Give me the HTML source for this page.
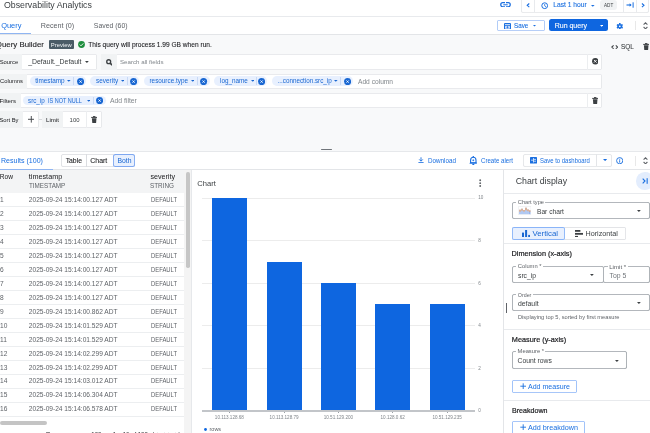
<!DOCTYPE html><html><head><meta charset="utf-8"><style>
html,body{margin:0;padding:0;width:650px;height:433px;overflow:hidden;background:#fff}
body{position:relative;font-family:"Liberation Sans",sans-serif;filter:blur(0.45px)}
.r{position:absolute;display:block}
.t{position:absolute;white-space:pre;line-height:1}
</style></head><body>
<div class="r" style="left:0px;top:0px;width:650px;height:433px;background:#ffffff;"></div>
<div class="r" style="left:0px;top:34px;width:650px;height:118px;background:#f8f9fa;"></div>
<div class="r" style="left:0px;top:16px;width:650px;height:1px;background:#e8eaed;"></div>
<div class="r" style="left:0px;top:33.5px;width:650px;height:1px;background:#e3e5e8;"></div>
<div class="r" style="left:0px;top:151px;width:650px;height:0.8px;background:#e6e8eb;"></div>
<div class="r" style="left:0px;top:169px;width:650px;height:1px;background:#e3e5e8;"></div>
<svg class="r" style="left:499.5px;top:1.8px" width="11" height="5.6" viewBox="0 0 11 5.6"><path d="M5 0.75 H2.8 A2.05 2.05 0 0 0 2.8 4.85 H5 M6 0.75 H8.2 A2.05 2.05 0 0 1 8.2 4.85 H6" fill="none" stroke="#1a6fe0" stroke-width="1.25"/><rect x="3.3" y="2.3" width="4.4" height="1" fill="#1a6fe0"/></svg>
<div class="r" style="left:520.8px;top:-4px;width:128px;height:16.9px;background:#fff;box-shadow:inset 0 0 0 0.8px #e3e5e8;border-radius:2.5px;"></div>
<div class="r" style="left:534.2px;top:0px;width:0.8px;height:12px;background:#e8eaed;"></div>
<div class="r" style="left:623.2px;top:0px;width:0.8px;height:12px;background:#e8eaed;"></div>
<div class="r" style="left:636px;top:0px;width:0.8px;height:12px;background:#e8eaed;"></div>
<svg class="r" style="left:525.6px;top:3.2px" width="4.2" height="4.6" viewBox="0 0 4.2 4.6"><path d="M3.3 0.5 L1.2 2.3 L3.3 4.1" fill="none" stroke="#1a6fe0" stroke-width="1.1"/></svg>
<svg class="r" style="left:540.8px;top:2.4px" width="7.4" height="7.4" viewBox="0 0 7.4 7.4"><circle cx="3.7" cy="3.7" r="2.9" fill="none" stroke="#1a6fe0" stroke-width="1"/><path d="M3.7 2 V3.9 L5 4.8" fill="none" stroke="#1a6fe0" stroke-width="0.8"/></svg>
<svg class="r" style="left:590.8px;top:5px" width="4" height="2" viewBox="0 0 4 2"><path d="M0 0 H3.6 L1.8 1.8Z" fill="#1a6fe0"/></svg>
<div class="r" style="left:599.6px;top:0px;width:17px;height:10px;background:#f1f3f4;border-radius:3px;"></div>
<svg class="r" style="left:626px;top:2px" width="8.5" height="6" viewBox="0 0 8.5 6"><path d="M0.5 3 H5" stroke="#1a6fe0" stroke-width="1.1"/><path d="M3.6 1.3 L5.6 3 L3.6 4.7Z" fill="#1a6fe0"/><rect x="6.6" y="0.3" width="1" height="5.4" fill="#1a6fe0"/></svg>
<svg class="r" style="left:640.6px;top:3.2px" width="4.2" height="4.6" viewBox="0 0 4.2 4.6"><path d="M0.9 0.5 L3.0 2.3 L0.9 4.1" fill="none" stroke="#1a6fe0" stroke-width="1.1"/></svg>
<div class="r" style="left:0px;top:32.6px;width:31px;height:1.2px;background:#8fb5f2;"></div>
<div class="r" style="left:497.3px;top:20.2px;width:47.6px;height:10.6px;background:#fff;box-shadow:inset 0 0 0 0.8px #9ebff5;border-radius:2px;"></div>
<svg class="r" style="left:503.8px;top:22.6px" width="7" height="6.6" viewBox="0 0 7 6.6"><rect x="0" y="0" width="7" height="6.6" rx="1" fill="#1a6fe0"/><rect x="1" y="1.3" width="5" height="0.7" fill="#fff"/><rect x="1" y="2.8" width="5" height="2.9" rx="0.4" fill="#cfe0fb"/><path d="M3.5 3.1 V5.4 M2.4 4.25 H4.6" stroke="#1a6fe0" stroke-width="0.7"/></svg>
<svg class="r" style="left:533.2px;top:25.2px" width="3.2" height="1.8" viewBox="0 0 3.2 1.8"><path d="M0 0 H3 L1.5 1.6Z" fill="#1a6fe0"/></svg>
<div class="r" style="left:549px;top:19.4px;width:58.7px;height:11.5px;background:#0e66e0;border-radius:2.5px;"></div>
<svg class="r" style="left:599.8px;top:24.6px" width="3.4" height="2" viewBox="0 0 3.4 2"><path d="M0 0 H3.2 L1.6 1.7Z" fill="#fff"/></svg>
<svg class="r" style="left:615.5px;top:22.7px" width="7.6" height="6.6" viewBox="0 0 7.6 6.6"><g transform="translate(3.8 3.3)"><circle r="2.4" fill="#1a6fe0"/><rect x="-0.8" y="-3.3" width="1.6" height="1.6" fill="#1a6fe0" transform="rotate(0)"/><rect x="-0.8" y="-3.3" width="1.6" height="1.6" fill="#1a6fe0" transform="rotate(60)"/><rect x="-0.8" y="-3.3" width="1.6" height="1.6" fill="#1a6fe0" transform="rotate(120)"/><rect x="-0.8" y="-3.3" width="1.6" height="1.6" fill="#1a6fe0" transform="rotate(180)"/><rect x="-0.8" y="-3.3" width="1.6" height="1.6" fill="#1a6fe0" transform="rotate(240)"/><rect x="-0.8" y="-3.3" width="1.6" height="1.6" fill="#1a6fe0" transform="rotate(300)"/><circle r="0.9" fill="#fff"/></g></svg>
<div class="r" style="left:635.0px;top:21px;width:0.7px;height:9px;background:#e8e8e8;"></div>
<svg class="r" style="left:642.9px;top:21.8px" width="5" height="7.6" viewBox="0 0 5 7.6"><path d="M0.6 2.6 L2.5 0.8 L4.4 2.6 M0.6 5 L2.5 6.8 L4.4 5" fill="none" stroke="#5f6368" stroke-width="1.1"/></svg>
<div class="r" style="left:48.7px;top:40px;width:25.1px;height:8.9px;background:#4a5b66;border-radius:1px;"></div>
<svg class="r" style="left:78.2px;top:41.4px" width="7" height="7" viewBox="0 0 7 7"><circle cx="3.5" cy="3.5" r="3.4" fill="#1e8e3e"/><path d="M1.8 3.6 L3 4.8 L5.3 2.4" fill="none" stroke="#fff" stroke-width="0.9"/></svg>
<svg class="r" style="left:611px;top:45px" width="7.4" height="4.2" viewBox="0 0 7.4 4.2"><path d="M2.6 0.4 L0.8 2.1 L2.6 3.8 M4.8 0.4 L6.6 2.1 L4.8 3.8" fill="none" stroke="#3c4043" stroke-width="1.05"/></svg>
<svg class="r" style="left:642.6px;top:43.2px" width="6.4" height="7.2" viewBox="0 0 6.4 7.2"><rect x="0.2" y="0.9" width="6" height="1" fill="#3c4043"/><rect x="2" y="0.1" width="2.4" height="1" fill="#3c4043"/><path d="M0.9 2.2 H5.5 L5.1 7 H1.3Z" fill="#3c4043"/></svg>
<div class="r" style="left:0px;top:54.2px;width:97px;height:15.6px;background:#fff;box-shadow:inset 0 0 0 0.8px #e2e4e7;border-radius:2px;"></div>
<div class="r" style="left:0px;top:54.2px;width:21.8px;height:15.6px;background:#f1f3f4;"></div>
<svg class="r" style="left:85.2px;top:61.2px" width="4" height="2.2" viewBox="0 0 4 2.2"><path d="M0 0 H3.8 L1.9 1.9Z" fill="#3c4043"/></svg>
<div class="r" style="left:100.5px;top:54.2px;width:501.5px;height:15.6px;background:#fff;box-shadow:inset 0 0 0 0.8px #e2e4e7;border-radius:2px;"></div>
<div class="r" style="left:100.5px;top:54.2px;width:16.8px;height:15.6px;background:#f1f3f4;"></div>
<svg class="r" style="left:105.6px;top:58.8px" width="6.8" height="6.8" viewBox="0 0 6.8 6.8"><circle cx="2.7" cy="2.7" r="1.95" fill="none" stroke="#3c4043" stroke-width="1.35"/><path d="M4.1 4.1 L6.3 6.3" stroke="#3c4043" stroke-width="1.6"/></svg>
<div class="r" style="left:587.3px;top:54.2px;width:0.7px;height:15.6px;background:#eceef0;"></div>
<svg class="r" style="left:591.6px;top:58.3px" width="6.6" height="6.6" viewBox="0 0 6.6 6.6"><circle cx="3.3" cy="3.3" r="3.2" fill="#3c4043"/><path d="M2 2 L4.6 4.6 M4.6 2 L2 4.6" stroke="#fff" stroke-width="0.9"/></svg>
<div class="r" style="left:0px;top:73.6px;width:602px;height:15.2px;background:#fff;box-shadow:inset 0 0 0 0.8px #e2e4e7;border-radius:2px;"></div>
<div class="r" style="left:0px;top:73.6px;width:27px;height:15.2px;background:#f1f3f4;"></div>
<div class="r" style="left:29.7px;top:76.2px;width:56.3px;height:9.799999999999997px;background:#e8f0fe;border-radius:4.899999999999999px;"></div>
<svg class="r" style="left:67.4px;top:80.3px" width="3.6" height="2" viewBox="0 0 3.6 2"><path d="M0 0 H3.6 L1.8 1.8Z" fill="#1967d2"/></svg>
<div class="r" style="left:73.3px;top:77.2px;width:0.7px;height:7.799999999999997px;background:#c9d9f5;"></div>
<svg class="r" style="left:76.7px;top:77.5px" width="7.2" height="7.2" viewBox="0 0 7.2 7.2"><circle cx="3.6" cy="3.6" r="3.55" fill="#1967d2"/><path d="M2.5 2.5 L4.7 4.7 M4.7 2.5 L2.5 4.7" stroke="#fff" stroke-width="0.9"/></svg>
<div class="r" style="left:90.2px;top:76.2px;width:49.3px;height:9.799999999999997px;background:#e8f0fe;border-radius:4.899999999999999px;"></div>
<svg class="r" style="left:120.9px;top:80.3px" width="3.6" height="2" viewBox="0 0 3.6 2"><path d="M0 0 H3.6 L1.8 1.8Z" fill="#1967d2"/></svg>
<div class="r" style="left:126.8px;top:77.2px;width:0.7px;height:7.799999999999997px;background:#c9d9f5;"></div>
<svg class="r" style="left:130.20000000000002px;top:77.5px" width="7.2" height="7.2" viewBox="0 0 7.2 7.2"><circle cx="3.6" cy="3.6" r="3.55" fill="#1967d2"/><path d="M2.5 2.5 L4.7 4.7 M4.7 2.5 L2.5 4.7" stroke="#fff" stroke-width="0.9"/></svg>
<div class="r" style="left:143.9px;top:76.2px;width:65.79999999999998px;height:9.799999999999997px;background:#e8f0fe;border-radius:4.899999999999999px;"></div>
<svg class="r" style="left:190.7px;top:80.3px" width="3.6" height="2" viewBox="0 0 3.6 2"><path d="M0 0 H3.6 L1.8 1.8Z" fill="#1967d2"/></svg>
<div class="r" style="left:196.6px;top:77.2px;width:0.7px;height:7.799999999999997px;background:#c9d9f5;"></div>
<svg class="r" style="left:200.4px;top:77.5px" width="7.2" height="7.2" viewBox="0 0 7.2 7.2"><circle cx="3.6" cy="3.6" r="3.55" fill="#1967d2"/><path d="M2.5 2.5 L4.7 4.7 M4.7 2.5 L2.5 4.7" stroke="#fff" stroke-width="0.9"/></svg>
<div class="r" style="left:214.2px;top:76.2px;width:53.30000000000001px;height:9.799999999999997px;background:#e8f0fe;border-radius:4.899999999999999px;"></div>
<svg class="r" style="left:250.5px;top:80.3px" width="3.6" height="2" viewBox="0 0 3.6 2"><path d="M0 0 H3.6 L1.8 1.8Z" fill="#1967d2"/></svg>
<div class="r" style="left:256.40000000000003px;top:77.2px;width:0.7px;height:7.799999999999997px;background:#c9d9f5;"></div>
<svg class="r" style="left:258.2px;top:77.5px" width="7.2" height="7.2" viewBox="0 0 7.2 7.2"><circle cx="3.6" cy="3.6" r="3.55" fill="#1967d2"/><path d="M2.5 2.5 L4.7 4.7 M4.7 2.5 L2.5 4.7" stroke="#fff" stroke-width="0.9"/></svg>
<div class="r" style="left:272.2px;top:76.2px;width:81.19999999999999px;height:9.799999999999997px;background:#e8f0fe;border-radius:4.899999999999999px;"></div>
<svg class="r" style="left:334.4px;top:80.3px" width="3.6" height="2" viewBox="0 0 3.6 2"><path d="M0 0 H3.6 L1.8 1.8Z" fill="#1967d2"/></svg>
<div class="r" style="left:340.3px;top:77.2px;width:0.7px;height:7.799999999999997px;background:#c9d9f5;"></div>
<svg class="r" style="left:344.09999999999997px;top:77.5px" width="7.2" height="7.2" viewBox="0 0 7.2 7.2"><circle cx="3.6" cy="3.6" r="3.55" fill="#1967d2"/><path d="M2.5 2.5 L4.7 4.7 M4.7 2.5 L2.5 4.7" stroke="#fff" stroke-width="0.9"/></svg>
<div class="r" style="left:0px;top:93.2px;width:602px;height:15.1px;background:#fff;box-shadow:inset 0 0 0 0.8px #e2e4e7;border-radius:2px;"></div>
<div class="r" style="left:0px;top:93.2px;width:20.5px;height:15.1px;background:#f1f3f4;"></div>
<div class="r" style="left:22.6px;top:95.8px;width:83.0px;height:9.299999999999997px;background:#e8f0fe;border-radius:4.649999999999999px;"></div>
<svg class="r" style="left:86.8px;top:99.64999999999999px" width="3.6" height="2" viewBox="0 0 3.6 2"><path d="M0 0 H3.6 L1.8 1.8Z" fill="#1967d2"/></svg>
<div class="r" style="left:92.69999999999999px;top:96.8px;width:0.7px;height:7.299999999999997px;background:#c9d9f5;"></div>
<svg class="r" style="left:96.3px;top:96.85px" width="7.2" height="7.2" viewBox="0 0 7.2 7.2"><circle cx="3.6" cy="3.6" r="3.55" fill="#1967d2"/><path d="M2.5 2.5 L4.7 4.7 M4.7 2.5 L2.5 4.7" stroke="#fff" stroke-width="0.9"/></svg>
<div class="r" style="left:587.3px;top:93.2px;width:0.7px;height:15.1px;background:#eceef0;"></div>
<svg class="r" style="left:592px;top:97.3px" width="6.4" height="7.2" viewBox="0 0 6.4 7.2"><rect x="0.2" y="0.9" width="6" height="1" fill="#3c4043"/><rect x="2" y="0.1" width="2.4" height="1" fill="#3c4043"/><path d="M0.9 2.2 H5.5 L5.1 7 H1.3Z" fill="#3c4043"/></svg>
<div class="r" style="left:0px;top:111.4px;width:38.5px;height:16.2px;background:#fff;box-shadow:inset 0 0 0 0.8px #e2e4e7;border-radius:2px;"></div>
<div class="r" style="left:0px;top:111.4px;width:22.5px;height:16.2px;background:#f1f3f4;"></div>
<svg class="r" style="left:27.5px;top:116.3px" width="6.6" height="6.6" viewBox="0 0 6.6 6.6"><path d="M3.3 0 V6.6 M0 3.3 H6.6" stroke="#3c4043" stroke-width="0.9"/></svg>
<div class="r" style="left:38.8px;top:119.3px;width:3.2px;height:0.7px;background:#d5d7da;"></div>
<div class="r" style="left:41.5px;top:111.4px;width:60.2px;height:16.2px;background:#fff;box-shadow:inset 0 0 0 0.8px #e2e4e7;border-radius:2px;"></div>
<div class="r" style="left:41.5px;top:111.4px;width:21.2px;height:16.2px;background:#f1f3f4;"></div>
<div class="r" style="left:86.2px;top:111.4px;width:0.7px;height:16.2px;background:#eceef0;"></div>
<svg class="r" style="left:90.8px;top:115.8px" width="6.4" height="7.2" viewBox="0 0 6.4 7.2"><rect x="0.2" y="0.9" width="6" height="1" fill="#3c4043"/><rect x="2" y="0.1" width="2.4" height="1" fill="#3c4043"/><path d="M0.9 2.2 H5.5 L5.1 7 H1.3Z" fill="#3c4043"/></svg>
<div class="r" style="left:321.4px;top:148.9px;width:10.5px;height:1.6px;background:#70757a;border-radius:0.8px;"></div>
<div class="r" style="left:0px;top:168.6px;width:52.7px;height:1.2px;background:#8fb5f2;"></div>
<div class="r" style="left:61.2px;top:154.3px;width:74.1px;height:12.9px;background:#fff;box-shadow:inset 0 0 0 0.8px #dadce0;border-radius:2.5px;"></div>
<div class="r" style="left:86.3px;top:154.3px;width:0.7px;height:12.9px;background:#dadce0;"></div>
<div class="r" style="left:112.6px;top:154.3px;width:22.7px;height:12.9px;background:#e8f0fe;box-shadow:inset 0 0 0 0.9px #7fa8f0;border-radius:2.5px;"></div>
<svg class="r" style="left:418.3px;top:157.3px" width="6" height="6.2" viewBox="0 0 6 6.2"><path d="M3 0.3 V4 M1.2 2.4 L3 4.2 L4.8 2.4" fill="none" stroke="#1a6fe0" stroke-width="0.9"/><rect x="0.4" y="5.2" width="5.2" height="0.9" fill="#1a6fe0"/></svg>
<svg class="r" style="left:468.9px;top:156.0px" width="8.6" height="9" viewBox="0 0 8.6 9"><rect x="3.6" y="0" width="1.4" height="1.6" rx="0.5" fill="#1a6fe0"/><path d="M1.6 7 V4.3 Q1.6 1.3 4.3 1.3 Q7 1.3 7 4.3 V7 Z" fill="none" stroke="#1a6fe0" stroke-width="1.1"/><path d="M0.2 7.4 L1.4 6.3 H7.2 L8.4 7.4 Z" fill="#1a6fe0"/><path d="M3.4 4.3 H5.2 M4.3 3.4 V5.2" stroke="#1a6fe0" stroke-width="0.8"/><rect x="3.3" y="7.8" width="2" height="1.1" rx="0.5" fill="#1a6fe0"/></svg>
<div class="r" style="left:523px;top:154.3px;width:88.7px;height:12.3px;background:#fff;box-shadow:inset 0 0 0 0.8px #e0e2e5;border-radius:2.5px;"></div>
<div class="r" style="left:596.2px;top:154.4px;width:0.7px;height:12px;background:#e3e5e8;"></div>
<svg class="r" style="left:530px;top:157.3px" width="7" height="6.5" viewBox="0 0 7 6.5"><rect x="0" y="0" width="7" height="6.5" rx="0.6" fill="#1a6fe0"/><path d="M3.5 1 V5.5 M1 3.2 H3.5 M3.5 2.4 H6 M3.5 4.2 H6" stroke="#fff" stroke-width="0.7"/></svg>
<svg class="r" style="left:603.0px;top:159.2px" width="4.2" height="2.2" viewBox="0 0 4.2 2.2"><path d="M0 0 H4.2 L2.1 2.1Z" fill="#1a6fe0"/></svg>
<svg class="r" style="left:615.8px;top:156.8px" width="7.4" height="7.4" viewBox="0 0 7.4 7.4"><circle cx="3.7" cy="3.7" r="3.1" fill="none" stroke="#1a6fe0" stroke-width="0.9"/><rect x="3.25" y="3.2" width="0.9" height="2.4" fill="#1a6fe0"/><rect x="3.25" y="1.8" width="0.9" height="0.9" fill="#1a6fe0"/></svg>
<div class="r" style="left:635.0px;top:156px;width:0.7px;height:9.5px;background:#e8e8e8;"></div>
<svg class="r" style="left:642.9px;top:156.6px" width="5" height="7.6" viewBox="0 0 5 7.6"><path d="M0.6 2.6 L2.5 0.8 L4.4 2.6 M0.6 5 L2.5 6.8 L4.4 5" fill="none" stroke="#5f6368" stroke-width="1.1"/></svg>
<div class="r" style="left:0px;top:169.8px;width:184.3px;height:23.5px;background:#f3f4f5;"></div>
<div class="r" style="left:0px;top:205.8px;width:184.3px;height:0.8px;background:#eceef0;"></div>
<div class="r" style="left:0px;top:219.81px;width:184.3px;height:0.8px;background:#eceef0;"></div>
<div class="r" style="left:0px;top:233.82000000000002px;width:184.3px;height:0.8px;background:#eceef0;"></div>
<div class="r" style="left:0px;top:247.83px;width:184.3px;height:0.8px;background:#eceef0;"></div>
<div class="r" style="left:0px;top:261.84000000000003px;width:184.3px;height:0.8px;background:#eceef0;"></div>
<div class="r" style="left:0px;top:275.85px;width:184.3px;height:0.8px;background:#eceef0;"></div>
<div class="r" style="left:0px;top:289.86px;width:184.3px;height:0.8px;background:#eceef0;"></div>
<div class="r" style="left:0px;top:303.87px;width:184.3px;height:0.8px;background:#eceef0;"></div>
<div class="r" style="left:0px;top:317.88px;width:184.3px;height:0.8px;background:#eceef0;"></div>
<div class="r" style="left:0px;top:331.89px;width:184.3px;height:0.8px;background:#eceef0;"></div>
<div class="r" style="left:0px;top:345.9px;width:184.3px;height:0.8px;background:#eceef0;"></div>
<div class="r" style="left:0px;top:359.90999999999997px;width:184.3px;height:0.8px;background:#eceef0;"></div>
<div class="r" style="left:0px;top:373.92px;width:184.3px;height:0.8px;background:#eceef0;"></div>
<div class="r" style="left:0px;top:387.93px;width:184.3px;height:0.8px;background:#eceef0;"></div>
<div class="r" style="left:0px;top:401.94px;width:184.3px;height:0.8px;background:#eceef0;"></div>
<div class="r" style="left:0px;top:415.95000000000005px;width:184.3px;height:0.8px;background:#eceef0;"></div>
<div class="r" style="left:184.3px;top:170px;width:7px;height:263px;background:#f4f4f4;"></div>
<div class="r" style="left:186.2px;top:171.5px;width:3.6px;height:96.3px;background:#c6c6c6;border-radius:1.8px;"></div>
<div class="r" style="left:191.1px;top:170px;width:0.8px;height:263px;background:#e6e8eb;"></div>
<div class="r" style="left:0px;top:421.4px;width:47.2px;height:4px;background:#c4c4c4;border-radius:2px;"></div>
<svg class="r" style="left:479.3px;top:178.9px" width="2.4" height="8.4" viewBox="0 0 2.4 8.4"><circle cx="1.2" cy="1.3" r="0.95" fill="#5f6368"/><circle cx="1.2" cy="4.15" r="0.95" fill="#5f6368"/><circle cx="1.2" cy="7.0" r="0.95" fill="#5f6368"/></svg>
<div class="r" style="left:202px;top:367.74px;width:273px;height:0.8px;background:#ececec;"></div>
<div class="r" style="left:202px;top:325.18px;width:273px;height:0.8px;background:#ececec;"></div>
<div class="r" style="left:202px;top:282.62px;width:273px;height:0.8px;background:#ececec;"></div>
<div class="r" style="left:202px;top:240.06px;width:273px;height:0.8px;background:#ececec;"></div>
<div class="r" style="left:202px;top:197.5px;width:273px;height:0.8px;background:#ececec;"></div>
<div class="r" style="left:211.8px;top:197.8px;width:35.3px;height:212.8px;background:#0e66e0;"></div>
<div class="r" style="left:229.10000000000002px;top:410.6px;width:0.7px;height:2px;background:#9aa0a6;"></div>
<div class="r" style="left:266.5px;top:261.64px;width:35.3px;height:148.96px;background:#0e66e0;"></div>
<div class="r" style="left:283.8px;top:410.6px;width:0.7px;height:2px;background:#9aa0a6;"></div>
<div class="r" style="left:320.8px;top:282.92px;width:35.3px;height:127.68px;background:#0e66e0;"></div>
<div class="r" style="left:338.1px;top:410.6px;width:0.7px;height:2px;background:#9aa0a6;"></div>
<div class="r" style="left:375.1px;top:304.20000000000005px;width:35.3px;height:106.4px;background:#0e66e0;"></div>
<div class="r" style="left:392.40000000000003px;top:410.6px;width:0.7px;height:2px;background:#9aa0a6;"></div>
<div class="r" style="left:429.5px;top:304.20000000000005px;width:35.3px;height:106.4px;background:#0e66e0;"></div>
<div class="r" style="left:446.8px;top:410.6px;width:0.7px;height:2px;background:#9aa0a6;"></div>
<div class="r" style="left:202px;top:410.40000000000003px;width:273px;height:1.3px;background:#c2c5c9;"></div>
<svg class="r" style="left:203.9px;top:427.8px" width="3" height="3" viewBox="0 0 3 3"><circle cx="1.5" cy="1.5" r="1.4" fill="#0e66e0"/></svg>
<div class="r" style="left:503.3px;top:170px;width:0.8px;height:263px;background:#e3e5e8;"></div>
<div class="r" style="left:636.0px;top:172.4px;width:17.6px;height:17.6px;background:#e3edfd;border-radius:8.8px;"></div>
<svg class="r" style="left:641.9px;top:178.3px" width="6.5" height="6" viewBox="0 0 6.5 6"><path d="M0.7 0.7 L3 3 L0.7 5.3" fill="none" stroke="#1a6fe0" stroke-width="1.1"/><rect x="4.6" y="0.2" width="1.1" height="5.6" fill="#1a6fe0"/></svg>
<div class="r" style="left:504px;top:193.2px;width:146px;height:0.7px;background:#e8eaed;"></div>
<div class="r" style="left:511.5px;top:202px;width:138.10000000000002px;height:16.900000000000006px;background:#fff;box-shadow:inset 0 0 0 0.8px #9aa0a6;border-radius:2.5px;"></div>
<div class="r" style="left:516.3px;top:201px;width:29.2px;height:2px;background:#fff;"></div>
<svg class="r" style="left:517.6px;top:205.8px" width="13.4" height="9.2" viewBox="0 0 13.4 9.2"><rect x="0.3" y="0.3" width="12.8" height="8.6" rx="1" fill="#fff" stroke="#e3e5e8" stroke-width="0.6"/><rect x="1.4" y="3.6999999999999993" width="1.2" height="4.5" fill="#7fa6ea"/><rect x="1.4" y="3.6999999999999993" width="1.2" height="2.0" fill="#f4a261"/><rect x="3.4" y="2.6999999999999993" width="1.2" height="5.5" fill="#7fa6ea"/><rect x="3.4" y="2.6999999999999993" width="1.2" height="2.0" fill="#f4a261"/><rect x="5.3999999999999995" y="3.999999999999999" width="1.2" height="4.2" fill="#7fa6ea"/><rect x="5.3999999999999995" y="3.999999999999999" width="1.2" height="1.6" fill="#f4a261"/><rect x="7.3999999999999995" y="1.6999999999999993" width="1.2" height="6.5" fill="#7fa6ea"/><rect x="7.3999999999999995" y="1.6999999999999993" width="1.2" height="2.6" fill="#f4a261"/><rect x="9.4" y="3.3999999999999995" width="1.2" height="4.8" fill="#7fa6ea"/><rect x="9.4" y="3.3999999999999995" width="1.2" height="1.8" fill="#f4a261"/><rect x="11.2" y="4.3999999999999995" width="1.2" height="3.8" fill="#7fa6ea"/><rect x="11.2" y="4.3999999999999995" width="1.2" height="1.4" fill="#f4a261"/></svg>
<svg class="r" style="left:636.8px;top:209.6px" width="4" height="2.2" viewBox="0 0 4 2.2"><path d="M0 0 H3.8 L1.9 1.9Z" fill="#3c4043"/></svg>
<div class="r" style="left:512px;top:227px;width:113.9px;height:12.6px;background:#fff;box-shadow:inset 0 0 0 0.7px #dadce0;border-radius:2px;"></div>
<div class="r" style="left:512px;top:227px;width:53.4px;height:12.6px;background:#e8f0fe;box-shadow:inset 0 0 0 0.9px #8ab4f8;border-radius:2px;"></div>
<svg class="r" style="left:521.6px;top:229.6px" width="8.4" height="7.9" viewBox="0 0 8.4 7.9"><rect x="0" y="2.6" width="2" height="5.3" fill="#1967d2"/><rect x="3.1" y="0" width="2" height="7.9" fill="#1967d2"/><rect x="6.2" y="4.9" width="2" height="3" fill="#1967d2"/></svg>
<svg class="r" style="left:574.5px;top:229.8px" width="8.2" height="7.7" viewBox="0 0 8.2 7.7"><rect x="0" y="0" width="5.4" height="1.8" fill="#3c4043"/><rect x="0" y="2.95" width="8.2" height="1.8" fill="#3c4043"/><rect x="0" y="5.9" width="3" height="1.8" fill="#3c4043"/></svg>
<div class="r" style="left:504px;top:242.8px;width:146px;height:0.7px;background:#e8eaed;"></div>
<div class="r" style="left:511.6px;top:266.1px;width:92.29999999999995px;height:17.299999999999955px;background:#fff;box-shadow:inset 0 0 0 0.8px #9aa0a6;border-radius:2.5px;"></div>
<div class="r" style="left:516.3px;top:265.1px;width:26.7px;height:2px;background:#fff;"></div>
<svg class="r" style="left:590.2px;top:274.2px" width="4" height="2.2" viewBox="0 0 4 2.2"><path d="M0 0 H3.8 L1.9 1.9Z" fill="#3c4043"/></svg>
<div class="r" style="left:603.1px;top:266.1px;width:46.5px;height:17.299999999999955px;background:#fff;box-shadow:inset 0 0 0 0.8px #9aa0a6;border-radius:2.5px;"></div>
<div class="r" style="left:607.7px;top:265.1px;width:20.1px;height:2px;background:#fff;"></div>
<div class="r" style="left:511.6px;top:294.4px;width:138.0px;height:16.600000000000023px;background:#fff;box-shadow:inset 0 0 0 0.8px #9aa0a6;border-radius:2.5px;"></div>
<div class="r" style="left:516.3px;top:293.4px;width:16.6px;height:2px;background:#fff;"></div>
<svg class="r" style="left:636.8px;top:302.4px" width="4" height="2.2" viewBox="0 0 4 2.2"><path d="M0 0 H3.8 L1.9 1.9Z" fill="#3c4043"/></svg>
<div class="r" style="left:505.5px;top:303px;width:1px;height:9.5px;background:#5f6368;"></div>
<div class="r" style="left:504px;top:328.6px;width:146px;height:0.7px;background:#e8eaed;"></div>
<div class="r" style="left:512.0px;top:351.0px;width:115.0px;height:17.80000000000001px;background:#fff;box-shadow:inset 0 0 0 0.8px #9aa0a6;border-radius:2.5px;"></div>
<div class="r" style="left:516.1px;top:350.0px;width:29.4px;height:2px;background:#fff;"></div>
<svg class="r" style="left:615.2px;top:359.6px" width="4" height="2.2" viewBox="0 0 4 2.2"><path d="M0 0 H3.8 L1.9 1.9Z" fill="#3c4043"/></svg>
<div class="r" style="left:511.5px;top:379.5px;width:65.3px;height:13.5px;background:#fff;box-shadow:inset 0 0 0 0.8px #8ab4f8;border-radius:2px;"></div>
<svg class="r" style="left:519.5px;top:382.8px" width="6.4" height="6.4" viewBox="0 0 6.4 6.4"><path d="M3.2 0.3 V6.1 M0.3 3.2 H6.1" stroke="#1a6fe0" stroke-width="0.9"/></svg>
<div class="r" style="left:504px;top:400px;width:146px;height:0.7px;background:#e8eaed;"></div>
<div class="r" style="left:511.5px;top:420.8px;width:73.5px;height:16px;background:#fff;box-shadow:inset 0 0 0 0.8px #8ab4f8;border-radius:2px;"></div>
<svg class="r" style="left:519.5px;top:424.1px" width="6.4" height="6.4" viewBox="0 0 6.4 6.4"><path d="M3.2 0.3 V6.1 M0.3 3.2 H6.1" stroke="#1a6fe0" stroke-width="0.9"/></svg>
<div class="t" style="left:3.90px;top:1.00px;font-size:8.800px;color:#3c4043;">Observability Analytics</div>
<div class="t" style="left:553.20px;top:2.00px;font-size:6.700px;color:#1a6fe0;-webkit-text-stroke:0.1px currentColor;">Last 1 hour</div>
<div class="t" style="left:603.90px;top:3.00px;font-size:5.233px;color:#3c4043;transform:scaleX(0.889);transform-origin:0 0;">ADT</div>
<div class="t" style="left:1.20px;top:22.00px;font-size:7.450px;color:#1a6fe0;">Query</div>
<div class="t" style="left:40.70px;top:22.00px;font-size:7.200px;color:#5f6368;">Recent (0)</div>
<div class="t" style="left:93.80px;top:23.00px;font-size:6.900px;color:#5f6368;">Saved (60)</div>
<div class="t" style="left:513.50px;top:23.00px;font-size:6.541px;color:#1a6fe0;-webkit-text-stroke:0.1px currentColor;transform:scaleX(0.959);transform-origin:0 0;">Save</div>
<div class="t" style="left:554.70px;top:22.00px;font-size:7.000px;color:#ffffff;-webkit-text-stroke:0.1px currentColor;">Run query</div>
<div class="t" style="left:2.00px;top:41.00px;font-size:7.850px;color:#202124;-webkit-text-stroke:0.1px currentColor;">uery Builder</div>
<div class="t" style="left:-4.20px;top:41.00px;font-size:7.850px;color:#202124;-webkit-text-stroke:0.1px currentColor;">Q</div>
<div class="t" style="left:50.80px;top:43.00px;font-size:5.900px;color:#f1f4f6;">Preview</div>
<div class="t" style="left:88.30px;top:42.00px;font-size:6.600px;color:#202124;-webkit-text-stroke:0.08px currentColor;">This query will process 1.99 GB when run.</div>
<div class="t" style="left:620.90px;top:44.00px;font-size:6.450px;color:#3c4043;-webkit-text-stroke:0.1px currentColor;">SQL</div>
<div class="t" style="left:-0.30px;top:60.00px;font-size:5.850px;color:#202124;">Source</div>
<div class="t" style="left:28.20px;top:59.00px;font-size:6.900px;color:#3c4043;">_Default._Default</div>
<div class="t" style="left:119.70px;top:59.00px;font-size:6.250px;color:#80868b;transform:scaleX(0.986);transform-origin:0 0;">Search all fields</div>
<div class="t" style="left:0.00px;top:79.00px;font-size:5.800px;color:#202124;">Columns</div>
<div class="t" style="left:35.20px;top:78.00px;font-size:6.400px;color:#1967d2;">timestamp</div>
<div class="t" style="left:96.10px;top:78.00px;font-size:6.400px;color:#1967d2;">severity</div>
<div class="t" style="left:149.50px;top:78.00px;font-size:6.350px;color:#1967d2;">resource.type</div>
<div class="t" style="left:220.00px;top:78.00px;font-size:6.350px;color:#1967d2;">log_name</div>
<div class="t" style="left:277.50px;top:78.00px;font-size:6.300px;color:#1967d2;">...connection.src_ip</div>
<div class="t" style="left:357.90px;top:79.00px;font-size:6.541px;color:#80868b;transform:scaleX(1.016);transform-origin:0 0;">Add column</div>
<div class="t" style="left:-0.50px;top:98.00px;font-size:6.050px;color:#202124;">Filters</div>
<div class="t" style="left:28.00px;top:98.00px;font-size:6.541px;color:#1967d2;transform:scaleX(0.957);transform-origin:0 0;">src_ip</div>
<div class="t" style="left:47.70px;top:98.00px;font-size:6.541px;color:#1967d2;transform:scaleX(0.843);transform-origin:0 0;">IS NOT NULL</div>
<div class="t" style="left:110.00px;top:98.00px;font-size:6.541px;color:#80868b;transform:scaleX(1.042);transform-origin:0 0;">Add filter</div>
<div class="t" style="left:-0.50px;top:118.00px;font-size:5.800px;color:#202124;">Sort By</div>
<div class="t" style="left:46.00px;top:117.00px;font-size:6.150px;color:#202124;">Limit</div>
<div class="t" style="left:69.60px;top:118.00px;font-size:5.950px;color:#3c4043;">100</div>
<div class="t" style="left:1.00px;top:157.00px;font-size:7.050px;color:#1a6fe0;">Results (100)</div>
<div class="t" style="left:65.70px;top:158.00px;font-size:6.800px;color:#202124;-webkit-text-stroke:0.08px currentColor;">Table</div>
<div class="t" style="left:90.30px;top:158.00px;font-size:6.950px;color:#202124;-webkit-text-stroke:0.08px currentColor;">Chart</div>
<div class="t" style="left:117.50px;top:158.00px;font-size:6.800px;color:#1967d2;">Both</div>
<div class="t" style="left:428.00px;top:158.00px;font-size:6.541px;color:#1a6fe0;transform:scaleX(0.963);transform-origin:0 0;">Download</div>
<div class="t" style="left:481.00px;top:158.00px;font-size:6.541px;color:#1a6fe0;transform:scaleX(0.936);transform-origin:0 0;">Create alert</div>
<div class="t" style="left:540.00px;top:158.00px;font-size:6.395px;color:#1a6fe0;transform:scaleX(0.931);transform-origin:0 0;">Save to dashboard</div>
<div class="t" style="left:-0.30px;top:174.00px;font-size:6.600px;color:#202124;">Row</div>
<div class="t" style="left:28.80px;top:173.00px;font-size:7.250px;color:#202124;">timestamp</div>
<div class="t" style="left:28.80px;top:183.00px;font-size:6.831px;color:#5f6368;transform:scaleX(0.923);transform-origin:0 0;">TIMESTAMP</div>
<div class="t" style="left:150.40px;top:174.00px;font-size:7.150px;color:#202124;">severity</div>
<div class="t" style="left:150.40px;top:183.00px;font-size:6.831px;color:#5f6368;transform:scaleX(0.930);transform-origin:0 0;">STRING</div>
<div class="t" style="left:0.00px;top:197.00px;font-size:6.600px;color:#5f6368;">1</div>
<div class="t" style="left:28.80px;top:197.00px;font-size:6.600px;color:#5f6368;">2025-09-24 15:14:00.127 ADT</div>
<div class="t" style="left:150.90px;top:197.00px;font-size:6.831px;color:#5f6368;transform:scaleX(0.860);transform-origin:0 0;">DEFAULT</div>
<div class="t" style="left:0.00px;top:211.00px;font-size:6.600px;color:#5f6368;">2</div>
<div class="t" style="left:28.80px;top:211.00px;font-size:6.600px;color:#5f6368;">2025-09-24 15:14:00.127 ADT</div>
<div class="t" style="left:150.90px;top:211.00px;font-size:6.831px;color:#5f6368;transform:scaleX(0.860);transform-origin:0 0;">DEFAULT</div>
<div class="t" style="left:0.00px;top:225.00px;font-size:6.600px;color:#5f6368;">3</div>
<div class="t" style="left:28.80px;top:225.00px;font-size:6.600px;color:#5f6368;">2025-09-24 15:14:00.127 ADT</div>
<div class="t" style="left:150.90px;top:225.00px;font-size:6.831px;color:#5f6368;transform:scaleX(0.860);transform-origin:0 0;">DEFAULT</div>
<div class="t" style="left:0.00px;top:239.00px;font-size:6.600px;color:#5f6368;">4</div>
<div class="t" style="left:28.80px;top:239.00px;font-size:6.600px;color:#5f6368;">2025-09-24 15:14:00.127 ADT</div>
<div class="t" style="left:150.90px;top:239.00px;font-size:6.831px;color:#5f6368;transform:scaleX(0.860);transform-origin:0 0;">DEFAULT</div>
<div class="t" style="left:0.00px;top:253.00px;font-size:6.600px;color:#5f6368;">5</div>
<div class="t" style="left:28.80px;top:253.00px;font-size:6.600px;color:#5f6368;">2025-09-24 15:14:00.127 ADT</div>
<div class="t" style="left:150.90px;top:253.00px;font-size:6.831px;color:#5f6368;transform:scaleX(0.860);transform-origin:0 0;">DEFAULT</div>
<div class="t" style="left:0.00px;top:267.00px;font-size:6.600px;color:#5f6368;">6</div>
<div class="t" style="left:28.80px;top:267.00px;font-size:6.600px;color:#5f6368;">2025-09-24 15:14:00.127 ADT</div>
<div class="t" style="left:150.90px;top:267.00px;font-size:6.831px;color:#5f6368;transform:scaleX(0.860);transform-origin:0 0;">DEFAULT</div>
<div class="t" style="left:0.00px;top:281.00px;font-size:6.600px;color:#5f6368;">7</div>
<div class="t" style="left:28.80px;top:281.00px;font-size:6.600px;color:#5f6368;">2025-09-24 15:14:00.127 ADT</div>
<div class="t" style="left:150.90px;top:281.00px;font-size:6.831px;color:#5f6368;transform:scaleX(0.860);transform-origin:0 0;">DEFAULT</div>
<div class="t" style="left:0.00px;top:295.00px;font-size:6.600px;color:#5f6368;">8</div>
<div class="t" style="left:28.80px;top:295.00px;font-size:6.600px;color:#5f6368;">2025-09-24 15:14:00.127 ADT</div>
<div class="t" style="left:150.90px;top:295.00px;font-size:6.831px;color:#5f6368;transform:scaleX(0.860);transform-origin:0 0;">DEFAULT</div>
<div class="t" style="left:0.00px;top:309.00px;font-size:6.600px;color:#5f6368;">9</div>
<div class="t" style="left:28.80px;top:309.00px;font-size:6.600px;color:#5f6368;">2025-09-24 15:14:00.862 ADT</div>
<div class="t" style="left:150.90px;top:309.00px;font-size:6.831px;color:#5f6368;transform:scaleX(0.860);transform-origin:0 0;">DEFAULT</div>
<div class="t" style="left:0.00px;top:323.00px;font-size:6.600px;color:#5f6368;">10</div>
<div class="t" style="left:28.80px;top:323.00px;font-size:6.600px;color:#5f6368;">2025-09-24 15:14:01.529 ADT</div>
<div class="t" style="left:150.90px;top:323.00px;font-size:6.831px;color:#5f6368;transform:scaleX(0.860);transform-origin:0 0;">DEFAULT</div>
<div class="t" style="left:0.00px;top:337.00px;font-size:6.600px;color:#5f6368;">11</div>
<div class="t" style="left:28.80px;top:337.00px;font-size:6.600px;color:#5f6368;">2025-09-24 15:14:01.529 ADT</div>
<div class="t" style="left:150.90px;top:337.00px;font-size:6.831px;color:#5f6368;transform:scaleX(0.860);transform-origin:0 0;">DEFAULT</div>
<div class="t" style="left:0.00px;top:351.00px;font-size:6.600px;color:#5f6368;">12</div>
<div class="t" style="left:28.80px;top:351.00px;font-size:6.600px;color:#5f6368;">2025-09-24 15:14:02.299 ADT</div>
<div class="t" style="left:150.90px;top:351.00px;font-size:6.831px;color:#5f6368;transform:scaleX(0.860);transform-origin:0 0;">DEFAULT</div>
<div class="t" style="left:0.00px;top:365.00px;font-size:6.600px;color:#5f6368;">13</div>
<div class="t" style="left:28.80px;top:365.00px;font-size:6.600px;color:#5f6368;">2025-09-24 15:14:02.299 ADT</div>
<div class="t" style="left:150.90px;top:365.00px;font-size:6.831px;color:#5f6368;transform:scaleX(0.860);transform-origin:0 0;">DEFAULT</div>
<div class="t" style="left:0.00px;top:378.00px;font-size:6.600px;color:#5f6368;">14</div>
<div class="t" style="left:28.80px;top:378.00px;font-size:6.600px;color:#5f6368;">2025-09-24 15:14:03.012 ADT</div>
<div class="t" style="left:150.90px;top:378.00px;font-size:6.831px;color:#5f6368;transform:scaleX(0.860);transform-origin:0 0;">DEFAULT</div>
<div class="t" style="left:0.00px;top:392.00px;font-size:6.600px;color:#5f6368;">15</div>
<div class="t" style="left:28.80px;top:392.00px;font-size:6.600px;color:#5f6368;">2025-09-24 15:14:06.304 ADT</div>
<div class="t" style="left:150.90px;top:392.00px;font-size:6.831px;color:#5f6368;transform:scaleX(0.860);transform-origin:0 0;">DEFAULT</div>
<div class="t" style="left:0.00px;top:406.00px;font-size:6.600px;color:#5f6368;">16</div>
<div class="t" style="left:28.80px;top:406.00px;font-size:6.600px;color:#5f6368;">2025-09-24 15:14:06.578 ADT</div>
<div class="t" style="left:150.90px;top:406.00px;font-size:6.831px;color:#5f6368;transform:scaleX(0.860);transform-origin:0 0;">DEFAULT</div>
<div class="t" style="left:46.00px;top:431.00px;font-size:6.000px;color:#202124;">Rows per page:  100  ▾   1 – 16 of 100   |<  <  >  >|</div>
<div class="t" style="left:197.30px;top:180.00px;font-size:7.550px;color:#3c4043;">Chart</div>
<div class="t" style="left:478.20px;top:367.00px;font-size:4.600px;color:#80868b;">2</div>
<div class="t" style="left:478.20px;top:324.00px;font-size:4.600px;color:#80868b;">4</div>
<div class="t" style="left:478.20px;top:282.00px;font-size:4.600px;color:#80868b;">6</div>
<div class="t" style="left:478.20px;top:239.00px;font-size:4.600px;color:#80868b;">8</div>
<div class="t" style="left:478.20px;top:196.00px;font-size:4.600px;color:#80868b;">10</div>
<div class="t" style="left:478.20px;top:409.00px;font-size:4.600px;color:#80868b;">0</div>
<div class="t" style="left:229.40px;top:416.00px;font-size:4.600px;color:#80868b;transform:translateX(-50%);">10.113.128.68</div>
<div class="t" style="left:284.10px;top:416.00px;font-size:4.600px;color:#80868b;transform:translateX(-50%);">10.113.128.79</div>
<div class="t" style="left:338.40px;top:416.00px;font-size:4.600px;color:#80868b;transform:translateX(-50%);">10.51.129.200</div>
<div class="t" style="left:392.70px;top:416.00px;font-size:4.600px;color:#80868b;transform:translateX(-50%);">10.128.0.62</div>
<div class="t" style="left:447.10px;top:416.00px;font-size:4.600px;color:#80868b;transform:translateX(-50%);">10.51.129.235</div>
<div class="t" style="left:209.50px;top:427.00px;font-size:5.500px;color:#5f6368;">rows</div>
<div class="t" style="left:515.70px;top:177.00px;font-size:8.800px;color:#3c4043;">Chart display</div>
<div class="t" style="left:517.80px;top:200.00px;font-size:5.700px;color:#5f6368;">Chart type</div>
<div class="t" style="left:537.00px;top:209.00px;font-size:6.650px;color:#3c4043;">Bar chart</div>
<div class="t" style="left:532.50px;top:230.00px;font-size:7.800px;color:#1967d2;">Vertical</div>
<div class="t" style="left:585.50px;top:230.00px;font-size:7.200px;color:#3c4043;">Horizontal</div>
<div class="t" style="left:511.50px;top:250.00px;font-size:7.300px;color:#202124;-webkit-text-stroke:0.2px currentColor;">Dimension (x-axis)</div>
<div class="t" style="left:517.80px;top:264.00px;font-size:5.750px;color:#5f6368;">Column *</div>
<div class="t" style="left:518.00px;top:273.00px;font-size:6.750px;color:#3c4043;">src_ip</div>
<div class="t" style="left:609.20px;top:264.00px;font-size:6.150px;color:#5f6368;">Limit *</div>
<div class="t" style="left:609.50px;top:273.00px;font-size:6.850px;color:#70757a;">Top 5</div>
<div class="t" style="left:517.80px;top:293.00px;font-size:5.300px;color:#5f6368;">Order</div>
<div class="t" style="left:518.00px;top:301.00px;font-size:6.850px;color:#3c4043;">default</div>
<div class="t" style="left:518.00px;top:315.00px;font-size:5.700px;color:#5f6368;">Displaying top 5, sorted by first measure</div>
<div class="t" style="left:511.80px;top:336.00px;font-size:7.300px;color:#202124;-webkit-text-stroke:0.2px currentColor;">Measure (y-axis)</div>
<div class="t" style="left:517.60px;top:349.00px;font-size:5.800px;color:#5f6368;">Measure *</div>
<div class="t" style="left:517.50px;top:358.00px;font-size:6.800px;color:#3c4043;">Count rows</div>
<div class="t" style="left:528.00px;top:383.00px;font-size:7.050px;color:#1a6fe0;">Add measure</div>
<div class="t" style="left:512.00px;top:408.00px;font-size:7.100px;color:#202124;-webkit-text-stroke:0.2px currentColor;">Breakdown</div>
<div class="t" style="left:528.00px;top:424.00px;font-size:7.200px;color:#1a6fe0;">Add breakdown</div>
</body></html>
